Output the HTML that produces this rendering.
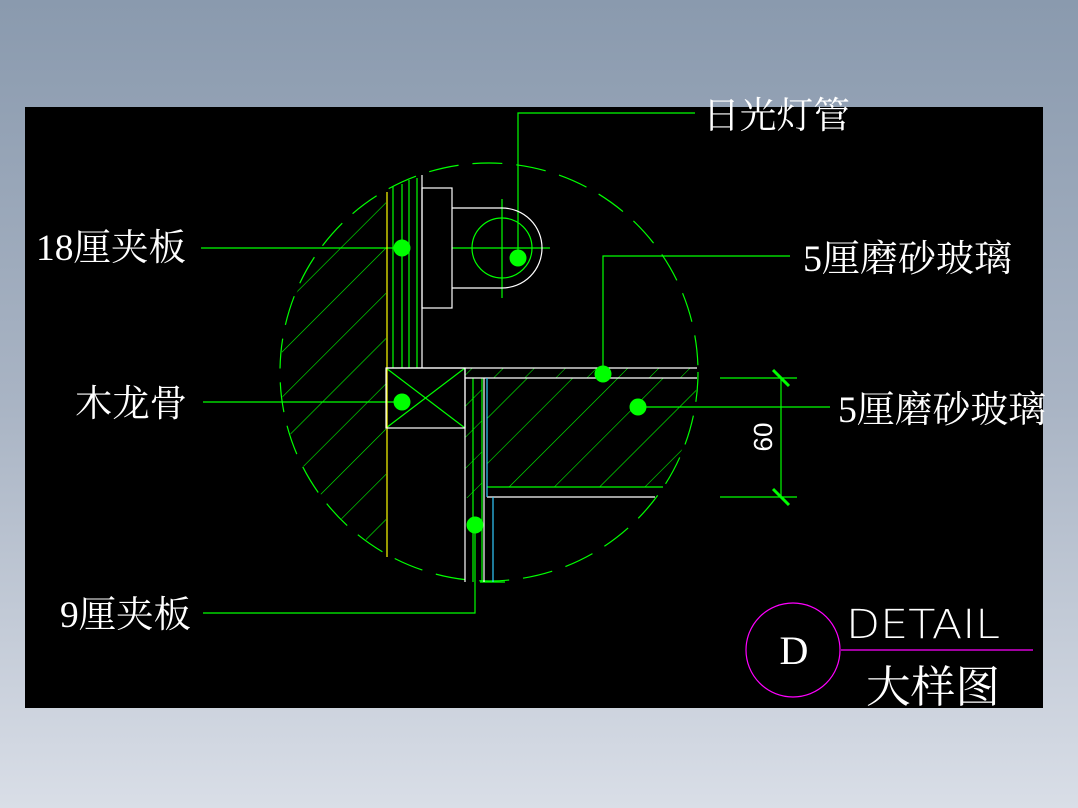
<!DOCTYPE html>
<html><head><meta charset="utf-8"><style>
html,body{margin:0;padding:0;}
body{width:1078px;height:808px;background:linear-gradient(#8a9aae,#a9b4c4 50%,#d9dee7);overflow:hidden;}
svg{display:block;}
text{font-family:"Liberation Serif","Noto Serif CJK SC",serif;fill:#fff;}
</style></head><body>
<svg width="1078" height="808" viewBox="0 0 1078 808">
<defs>
<pattern id="h" patternUnits="userSpaceOnUse" width="32" height="32" patternTransform="rotate(45)">
<line x1="0" y1="0" x2="0" y2="32" stroke="#00ff00" stroke-width="1.2" stroke-dasharray="90 22"/>
</pattern>
<pattern id="h2" patternUnits="userSpaceOnUse" width="22" height="22" patternTransform="rotate(45)">
<line x1="0" y1="0" x2="0" y2="22" stroke="#00ff00" stroke-width="1"/>
</pattern>
<clipPath id="c"><circle cx="489" cy="372" r="208"/></clipPath>
</defs>
<rect x="25" y="107" width="1018" height="601" fill="#000"/>
<g clip-path="url(#c)">
<rect x="270" y="160" width="116" height="430" fill="url(#h)"/>
<rect x="487" y="378" width="210" height="109" fill="url(#h)"/>
<rect x="465" y="368" width="232" height="10" fill="url(#h2)"/>
<rect x="465" y="378" width="17" height="120" fill="url(#h2)"/>
</g>
<circle cx="489" cy="372" r="209" fill="none" stroke="#00ff00" stroke-width="1.2" stroke-dasharray="30 14"/>
<g stroke="#00ff00" stroke-width="1.2" fill="none">
<line x1="393" y1="186" x2="393" y2="368"/><line x1="402" y1="184" x2="402" y2="368"/>
<line x1="409" y1="180" x2="409" y2="368"/><line x1="417" y1="178" x2="417" y2="368"/>
<circle cx="502" cy="248" r="30"/>
<line x1="452" y1="248" x2="550" y2="248"/><line x1="502" y1="199" x2="502" y2="298"/>
<line x1="473" y1="378" x2="473" y2="582"/><line x1="482" y1="378" x2="482" y2="582"/>
<line x1="487" y1="487" x2="663" y2="487"/>
<line x1="480" y1="582" x2="505" y2="582"/>
<line x1="386" y1="368" x2="465" y2="428"/><line x1="386" y1="428" x2="465" y2="368"/>
<line x1="201" y1="248" x2="402" y2="248"/>
<polyline points="518,258 518,113 695,113"/>
<polyline points="603,374 603,256 790,256"/>
<line x1="638" y1="407" x2="830" y2="407"/>
<line x1="203" y1="402" x2="402" y2="402"/>
<polyline points="475,525 475,613 203,613"/>
<line x1="720" y1="378" x2="797" y2="378"/><line x1="720" y1="497" x2="797" y2="497"/>
<line x1="781" y1="378" x2="781" y2="497"/>
<line x1="773" y1="370" x2="789" y2="386" stroke-width="3"/>
<line x1="773" y1="489" x2="789" y2="505" stroke-width="3"/>
</g>
<line x1="387" y1="192" x2="387" y2="557" stroke="#ffff00" stroke-width="1.2"/>
<g stroke="#fff" stroke-width="1.2" fill="none">
<line x1="422" y1="175" x2="422" y2="368"/>
<rect x="422" y="188" width="30" height="120"/>
<path d="M452 208 H502 A40 40 0 0 1 502 288 H452"/>
<line x1="386" y1="368" x2="697" y2="368"/>
<line x1="465" y1="378" x2="697" y2="378"/>
<rect x="386" y="368" width="79" height="60"/>
<line x1="465" y1="368" x2="465" y2="582"/>
<line x1="484" y1="378" x2="484" y2="582"/>
<line x1="487" y1="497" x2="655" y2="497"/>
</g>
<line x1="487" y1="378" x2="487" y2="497" stroke="#33ccff" stroke-width="1.2"/>
<line x1="493" y1="497" x2="493" y2="582" stroke="#33ccff" stroke-width="1.2"/>
<g fill="#00ff00">
<circle cx="402" cy="248" r="8.5"/><circle cx="518" cy="258" r="8.5"/>
<circle cx="603" cy="374" r="8.5"/><circle cx="638" cy="407" r="8.5"/>
<circle cx="402" cy="402" r="8.5"/><circle cx="475" cy="525" r="8.5"/>
</g>
<g font-size="37">
<text x="703" y="128" textLength="147" lengthAdjust="spacingAndGlyphs">日光灯管</text>
<text x="36" y="260" textLength="150" lengthAdjust="spacingAndGlyphs">18厘夹板</text>
<text x="803" y="271" textLength="209" lengthAdjust="spacingAndGlyphs">5厘磨砂玻璃</text>
<text x="838" y="422" textLength="208" lengthAdjust="spacingAndGlyphs">5厘磨砂玻璃</text>
<text x="75" y="416" textLength="112" lengthAdjust="spacingAndGlyphs">木龙骨</text>
<text x="60" y="627" textLength="131" lengthAdjust="spacingAndGlyphs">9厘夹板</text>
</g>
<text transform="translate(772,437) rotate(-90)" text-anchor="middle" font-size="26" style="font-family:'Liberation Sans',sans-serif">60</text>
<circle cx="793" cy="650" r="47" fill="none" stroke="#ff00ff" stroke-width="1.2"/>
<line x1="841" y1="650" x2="1033" y2="650" stroke="#ff00ff" stroke-width="1.2"/>
<text x="794" y="664" text-anchor="middle" font-size="40">D</text>
<text x="846" y="638" font-size="40" style="font-family:'DejaVu Sans','Liberation Sans',sans-serif;font-weight:200" textLength="154" lengthAdjust="spacingAndGlyphs">DETAIL</text>
<text x="866" y="702" font-size="44" textLength="134" lengthAdjust="spacingAndGlyphs">大样图</text>
</svg>
</body></html>
